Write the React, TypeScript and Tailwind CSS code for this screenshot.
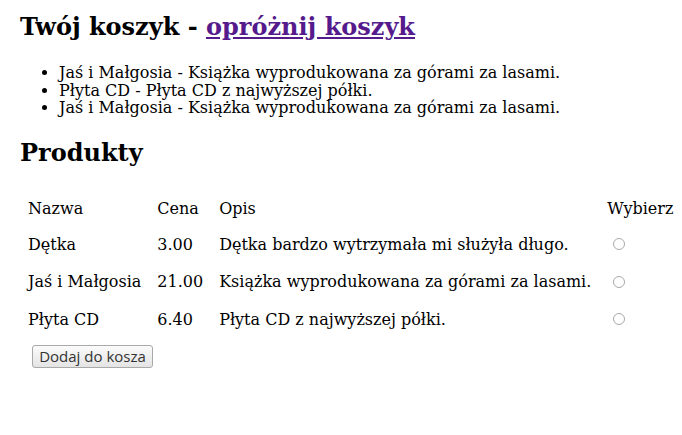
import React from 'react';

const serif = { fontFamily: '"DejaVu Serif", serif' };

const cart = [
  'Jaś i Małgosia - Książka wyprodukowana za górami za lasami.',
  'Płyta CD - Płyta CD z najwyższej półki.',
  'Jaś i Małgosia - Książka wyprodukowana za górami za lasami.',
];

const products = [
  { name: 'Dętka', price: '3.00', desc: 'Dętka bardzo wytrzymała mi służyła długo.' },
  { name: 'Jaś i Małgosia', price: '21.00', desc: 'Książka wyprodukowana za górami za lasami.' },
  { name: 'Płyta CD', price: '6.40', desc: 'Płyta CD z najwyższej półki.' },
];

export default function App() {
  return (
    <div className="w-[682px] h-[435px] bg-white text-black px-5 overflow-hidden" style={serif}>
      <h1 className="pt-[13px] text-[24px] leading-[28px] font-bold">
        Twój koszyk -{' '}
        <a href="#" className="text-[#551a8b] underline">opróżnij koszyk</a>
      </h1>

      <ul className="mt-[23px] pl-[39px] list-disc list-outside text-[16px] leading-[17.5px]">
        {cart.map((item, i) => (
          <li key={i}>{item}</li>
        ))}
      </ul>

      <h2 className="mt-[22px] text-[24px] leading-[28px] font-bold">Produkty</h2>

      <form className="mt-[24px]">
        <table className="text-[16px] leading-[19.5px]">
          <thead>
            <tr>
              <td className="px-2 pt-2 pb-[7.5px]">Nazwa</td>
              <td className="px-2 pt-2 pb-[7.5px]">Cena</td>
              <td className="px-2 pt-2 pb-[7.5px]">Opis</td>
              <td className="px-2 pt-2 pb-[7.5px]">Wybierz</td>
            </tr>
          </thead>
          <tbody>
            {products.map((p) => (
              <tr key={p.name}>
                <td className="px-2 py-[9px] whitespace-nowrap">{p.name}</td>
                <td className="px-2 py-[9px]">{p.price}</td>
                <td className="px-2 py-[9px] whitespace-nowrap">{p.desc}</td>
                <td className="px-2 py-[9px]">
                  <span className="block ml-[6px] w-[12px] h-[12px] rounded-full border border-[#a8a8a8] bg-white" />
                </td>
              </tr>
            ))}
          </tbody>
        </table>
        <button
          type="button"
          className="mt-[7px] ml-[12px] h-[23px] w-[121px] rounded-[3px] border border-[#a9a9a9] bg-gradient-to-b from-[#fbfbfb] to-[#e4e4e4] text-[15px] leading-[21px] text-[#333]"
          style={{ fontFamily: '"Open Sans", "DejaVu Sans", sans-serif' }}
        >
          Dodaj do kosza
        </button>
      </form>
    </div>
  );
}
